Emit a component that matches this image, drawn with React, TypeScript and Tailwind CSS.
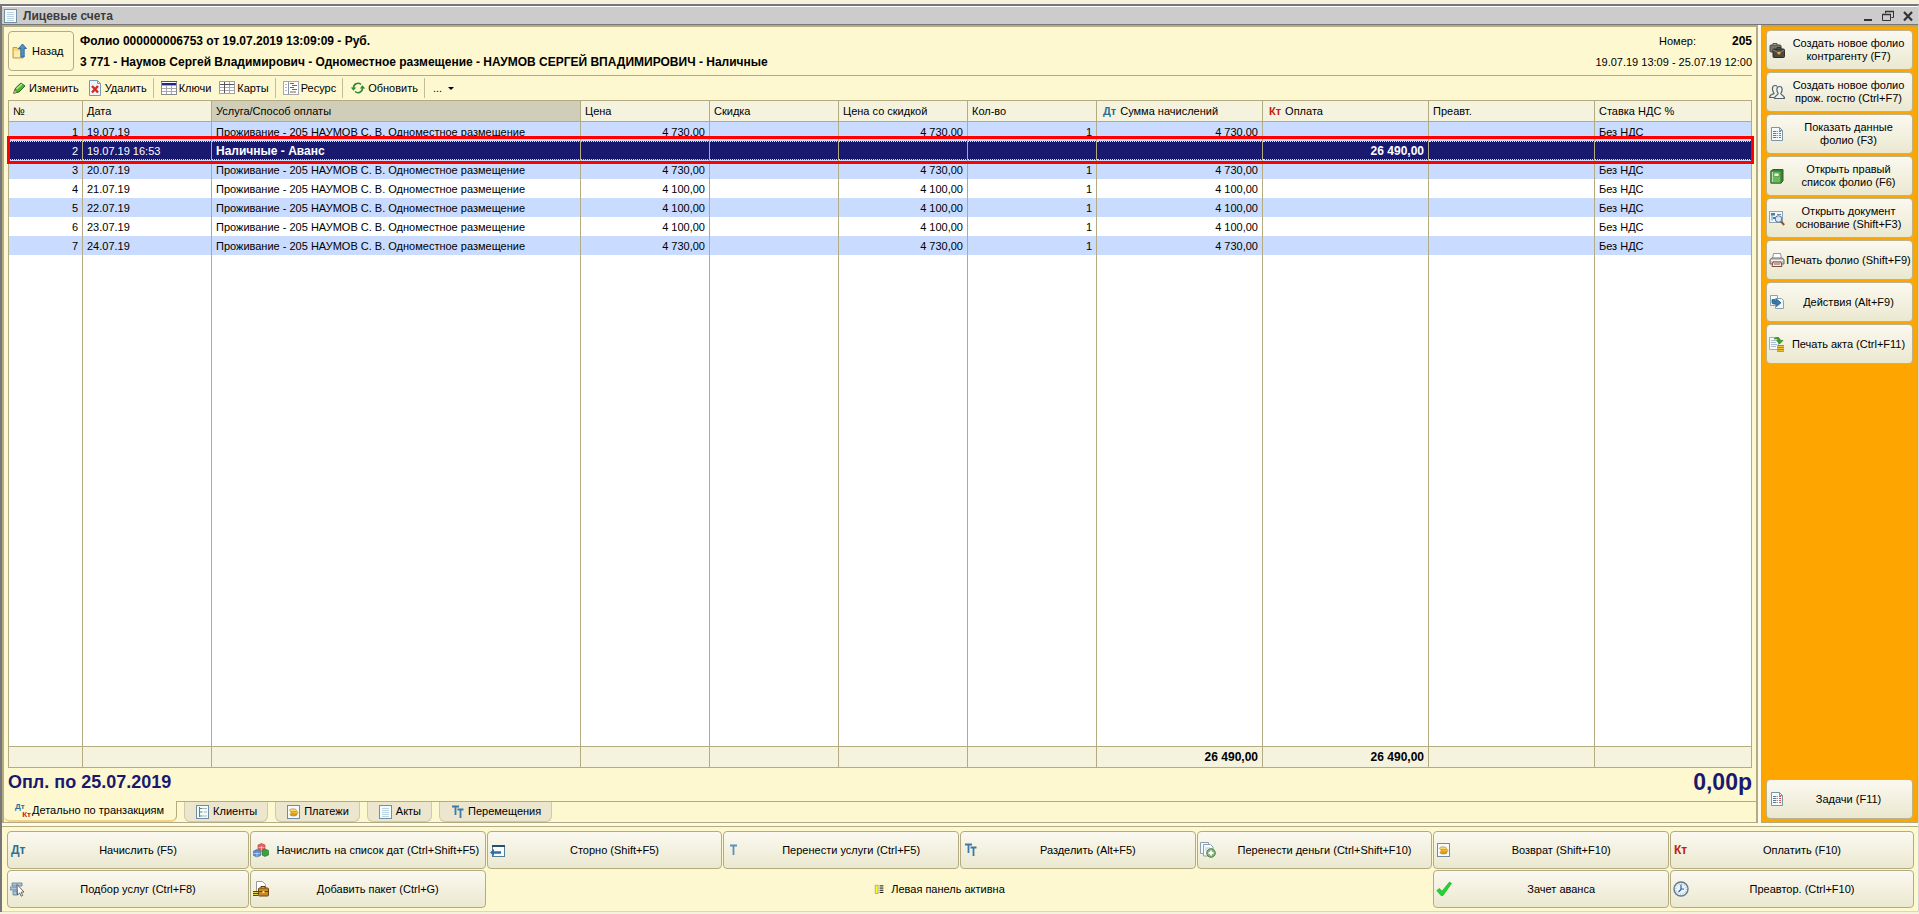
import React from "react";

/* --- ICONS --- */
const Svg = ({ children, size = 16 }: { children: React.ReactNode; size?: number }) => (
  <svg width={size} height={size} viewBox="0 0 16 16" fill="none" className="shrink-0" aria-hidden="true">
    {children}
  </svg>
);

const PageIcon = ({ size }: { size?: number }) => (
  <Svg size={size}>
    <rect x="1.5" y="1.5" width="12" height="13" fill="#f4fafe" stroke="#7390a3" />
    <path d="M4 4.5h7M4 6.5h7M4 8.5h7M4 10.5h7M4 12.5h7" stroke="#bcd3e2" />
  </Svg>
);

const BackIcon = () => (
  <Svg>
    <path d="M1 4.5h4l1 1.5h5v9H1z" fill="#f8d978" stroke="#c99b35" />
    <path d="M2 8h8v6H2z" fill="#fdeeb0" />
    <path d="M10.5 1l4 4.5h-2.3V14H8.8V5.500H6.500z" fill="#4b95cc" stroke="#1e5688" strokeWidth=".8" />
  </Svg>
);

const PencilIcon = () => (
  <Svg>
    <path d="M3 13l1.500-5L10 3l4 3-6 6z" fill="#52b234" stroke="#247017" />
    <path d="M5.500 9l5.500-5" stroke="#b4e99a" strokeWidth="1.500" />
    <path d="M2.500 13.500l1-3.500 3 2z" fill="#e8cf93" stroke="#4b5b2a" strokeWidth=".6" />
  </Svg>
);

const DeleteIcon = () => (
  <Svg>
    <path d="M2.500 .5h8l3 3v12h-11z" fill="#edf5fb" stroke="#7898b2" />
    <path d="M10.500 .5v3h3" stroke="#7898b2" />
    <path d="M5 6l6 6.500M11 6l-6 6.500" stroke="#d52b1e" strokeWidth="2.400" />
  </Svg>
);

const KeysIcon = () => (
  <Svg>
    <rect x=".5" y="1.500" width="15" height="13" fill="#fff" stroke="#8a8a8a" />
    <path d="M0 1.500h16" stroke="#555" />
    <rect x="1" y="3" width="14" height="2" fill="#1b2a8c" />
    <path d="M1 5.500h14M1 8.500h14M1 11.500h14M5.500 6v8M10.500 6v8" stroke="#a9a9a9" />
  </Svg>
);

const CardsIcon = () => (
  <Svg>
    <rect x=".5" y="1.500" width="15" height="12" fill="#fff" stroke="#a0a0a0" />
    <path d="M1 7.500h14M1 10.500h14M10.500 2v11" stroke="#a9a9a9" />
    <path d="M1 4.500h14M5.500 2v11" stroke="#555" />
  </Svg>
);

const ResourceIcon = () => (
  <Svg>
    <rect x=".5" y="1.500" width="15" height="13" fill="#fff" stroke="#a4a9ae" />
    <path d="M5.500 2v12" stroke="#8794a3" />
    <path d="M2 4.500h2M2 7.500h2M2 10.500h2" stroke="#b0b8c0" />
    <path d="M7 3.500h4M9 5.500h5M7 7.500h4M9 9.500h5M7 12h6" stroke="#8d5d33" />
  </Svg>
);

const RefreshIcon = () => (
  <Svg>
    <path d="M3.500 8a4.500 4.500 0 0 1 7.500-3.500M12.500 8a4.500 4.500 0 0 1-7.500 3.500" stroke="#2f8b32" strokeWidth="1.600" />
    <path d="M.8 7.500h5.400l-2.700 3.300zM9.800 8.500h5.400l-2.700-3.300z" fill="#2f8b32" />
  </Svg>
);

const CasesIcon = () => (
  <Svg>
    <path d="M4 3V1.500h4V3" stroke="#555" />
    <rect x="1" y="3" width="11" height="7" rx="1" fill="#77736b" stroke="#4a4741" />
    <path d="M8 7V5.500h4V7" stroke="#333" />
    <rect x="4" y="7" width="11.500" height="8.500" rx="1" fill="#4a4842" stroke="#2c2b28" />
    <path d="M4 8l6 3 5.500-3" stroke="#8b867a" />
    <circle cx="10" cy="11" r="1.600" fill="#f5a623" />
  </Svg>
);

const PeopleIcon = () => (
  <Svg>
    <path d="M5.500 9.500c-2 .6-4.500 1-5 4H5M5 9C3 7 2.500 1.500 6 1.500c1 0 1.700.4 2 1" stroke="#51626e" strokeWidth="1.200" />
    <path
      d="M10.500 2.500c-3.500 0-3 4.500-1.300 7C9 11.500 5.500 11 5.500 14.500h10c0-3.500-3.500-3-3.700-5C13.500 7 14 2.500 10.500 2.500z"
      fill="#f4f4ee"
      stroke="#51626e"
      strokeWidth="1.200"
    />
  </Svg>
);

const ReportIcon = () => (
  <Svg>
    <path d="M2.500 1.500h8l3 3v10h-11z" fill="#f6fafd" stroke="#7b95a8" />
    <path d="M10.500 1.500v3h3" stroke="#7b95a8" />
    <path d="M4 5.500h3M4 7.500h3M4 9.500h3M4 11.500h3" stroke="#567c9c" />
    <path d="M7.500 5.500h1.500M7.500 7.500h1.500M7.500 9.500h1.500M7.500 11.500h1.500" stroke="#999" />
    <path d="M10 5.500h2M10 7.500h2M10 9.500h2M10 11.500h2" stroke="#d2564b" />
  </Svg>
);

const BookIcon = () => (
  <Svg>
    <path d="M2 3l2-1.500h10V13l-2 2H2z" fill="#3f8a38" stroke="#2a6327" />
    <rect x="2" y="3" width="10" height="12" fill="#6cb95b" stroke="#2f7429" />
    <rect x="5" y="5" width="5" height="3.500" fill="#e2f4dc" stroke="#3c8635" strokeWidth=".6" />
    <path d="M3.500 4v10" stroke="#b9e2ae" />
  </Svg>
);

const DocSearchIcon = () => (
  <Svg>
    <rect x=".5" y="1.500" width="13" height="11" fill="#f3f8fc" stroke="#8ba5b8" />
    <path d="M2 3h4v2.500H2zM4 7h3v2H4z" fill="#4682ad" />
    <path d="M8 4.500h4M3 5v5.500" stroke="#6a93b0" />
    <circle cx="9.500" cy="9" r="3.300" fill="#d7e9f5" stroke="#63717b" />
    <path d="M12 11.500l3.200 3.500" stroke="#8a5a34" strokeWidth="2" />
  </Svg>
);

const PrinterIcon = () => (
  <Svg>
    <path d="M4.500 1.500h7l1 5h-9z" fill="#fff" stroke="#8c97a0" />
    <path d="M1 7.500L3 6h10l2 1.500V12H1z" fill="#c9c6c2" stroke="#6e6a66" />
    <path d="M2 8.500h12" stroke="#f4f1ee" />
    <path d="M4 10h8l1 4.500H3z" fill="#fbe9dd" stroke="#6e5446" />
    <path d="M5 12h6" stroke="#b0552d" />
  </Svg>
);

const ActionsIcon = () => (
  <Svg>
    <path d="M1.500 1.500h7v10h-7z" fill="#f6fafd" stroke="#8ba2b4" />
    <path d="M6.500 4.500h6l2 2v8h-8z" fill="#eff6fb" stroke="#8ba2b4" />
    <path d="M3 5.500v3c0 1 .7 1.500 2 1.500h2.500v2.500L12 8.800 7.500 5v2.500H6V5.500z" fill="#3a7cab" stroke="#205578" strokeWidth=".7" />
  </Svg>
);

const ActIcon = () => (
  <Svg>
    <path d="M.5 1.500h9v12h-9z" fill="#f7fafc" stroke="#9eb0bd" />
    <path d="M2 4.500h5M2 6.500h5M2 8.500h6M2 10.500h5" stroke="#a9bccb" />
    <path d="M5 3c3-2.500 6-1.500 6.500 1.500H14L10.500 8 7.500 4.500h2C9 3 7 2.500 5 3z" fill="#3da52c" stroke="#23731a" strokeWidth=".6" />
    <path d="M8 9.500h7V15H8z" fill="#f3c437" />
    <path d="M8 9.500h7M8 11.500h7M8 13.500h7M8 15.300h7" stroke="#b98715" />
  </Svg>
);

const CubesIcon = () => (
  <Svg>
    <path d="M5 3l3.500-1.500L12 3v4.500L8.500 9 5 7.500z" fill="#e3655d" stroke="#b03a38" strokeWidth=".6" />
    <path d="M.5 9L4 7.500 7.500 9v4.500L4 15 .5 13.500z" fill="#5b90cc" stroke="#33649b" strokeWidth=".6" />
    <path d="M9 8.500L12 7l3.500 1.500V13L12 14.500 9 13z" fill="#3da03c" stroke="#236c2b" strokeWidth=".6" />
    <path d="M4 10.500V15M.5 11.500H7M8.500 4v4.500M5.500 5.500h6" stroke="#fff" strokeOpacity=".6" strokeWidth=".8" />
  </Svg>
);

const StornoIcon = () => (
  <Svg>
    <rect x="2.500" y="3.500" width="12" height="11" fill="#f7fbfd" stroke="#527d99" />
    <path d="M2 4h13" stroke="#24516f" strokeWidth="2" />
    <path d="M0 10.500L4 7v2.300h7v2.400H4V14z" fill="#2f7198" />
  </Svg>
);

const PickIcon = () => (
  <Svg>
    <path d="M2 2h10v3H2zM0 6h8v3H0zM3 10h4v4H3z" fill="#a9c4d8" stroke="#5c7f98" strokeWidth=".8" />
    <path d="M7 3.500l7 7.500-2.800.2 1.500 3.200-1.500.8-1.500-3.200L7.500 14z" fill="#fff" stroke="#555" strokeWidth=".9" />
  </Svg>
);

const PackageIcon = () => (
  <Svg>
    <path d="M3.500.5h6l3 3v9h-9z" fill="#fff" stroke="#9a9a9a" />
    <path d="M8 7V5.500h4V7" stroke="#5b3a10" />
    <rect x="5.500" y="7" width="10" height="8" rx="1" fill="#c98a25" stroke="#6b4410" />
    <path d="M5.500 10.500h10" stroke="#6b4410" />
    <path d="M9.500 10h2v2h-2z" fill="#ffe48a" />
    <path d="M0 10.500h5M0 12.500h5M0 14.500h5" stroke="#4d4a10" />
    <path d="M0 11.500h5M0 13.500h5" stroke="#e5d83c" />
  </Svg>
);

const CopyPlusIcon = () => (
  <Svg>
    <path d="M.5.5h8v11h-8z" fill="#f5f9fc" stroke="#8ba0b0" />
    <path d="M3.500 2.500h7l2.500 2.500v9h-9.500z" fill="#f8fbfd" stroke="#8ba0b0" />
    <path d="M5 6h5M5 8h3" stroke="#b7c8d5" />
    <circle cx="11" cy="11" r="4.300" fill="#84b877" stroke="#557f4c" />
    <path d="M11 8.500v5M8.500 11h5" stroke="#fff" strokeWidth="1.800" />
  </Svg>
);

const CoinsIcon = () => (
  <Svg>
    <rect x="1.500" y="1.500" width="12" height="13" fill="#f6fafd" stroke="#6f8ca3" />
    <ellipse cx="7.500" cy="10.500" rx="3.500" ry="1.500" fill="#e2a21d" stroke="#b87c10" strokeWidth=".6" />
    <ellipse cx="8.500" cy="8.500" rx="3.500" ry="1.500" fill="#f2bd3a" stroke="#b87c10" strokeWidth=".6" />
    <ellipse cx="7" cy="6.300" rx="3.500" ry="1.500" fill="#fbd862" stroke="#b87c10" strokeWidth=".6" />
  </Svg>
);

const ClientsIcon = () => (
  <Svg>
    <rect x="1.500" y="1.500" width="12" height="13" fill="#f4fafb" stroke="#6f8ca3" />
    <path d="M4.500 3v10M4.500 4.500h3M4.500 8h3M4.500 12h3" stroke="#4f8c74" />
    <path d="M8 4.500h4M9 8h3M8 12h4" stroke="#a4b6c2" />
  </Svg>
);

const CheckIcon = () => (
  <Svg>
    <path d="M.8 9.500l2.700-2 2.500 2.700L13.500 1l2 1.500L7 14.500H5z" fill="#22d432" stroke="#14a324" strokeWidth=".6" />
  </Svg>
);

const ClockIcon = () => (
  <Svg>
    <circle cx="8" cy="8" r="7" fill="#e8f2fa" stroke="#62798b" strokeWidth="1.400" />
    <circle cx="8" cy="8" r="5.200" stroke="#8fa9bd" strokeDasharray="1 1.700" />
    <path d="M8 3.500v5L5.500 11M8 8h3" stroke="#2d6390" strokeWidth="1.200" />
  </Svg>
);

const PanelIcon = () => (
  <Svg size={10}>
    <rect x="2" y="2" width="4.500" height="13" fill="#ff0" stroke="#aaa" strokeWidth="1.500" />
    <path d="M9 3h6M9 6.500h6M9 10h6M9 13.500h6" stroke="#111" strokeWidth="1.600" />
  </Svg>
);

const Debit = () => <span className="w-4 shrink-0 pl-px text-left text-xs font-bold text-[#2e6f97]">Дт</span>;
const Credit = () => <span className="w-4 shrink-0 pl-px text-left text-xs font-bold text-[#c4200c]">Кт</span>;
const DebitCredit = () => (
  <span className="relative block h-4 w-4 shrink-0 text-[8px] leading-none font-bold">
    <span className="absolute top-0 left-0 text-[#2e6f97]">Дт</span>
    <span className="absolute right-0 bottom-0 text-[#c4200c]">Кт</span>
  </span>
);
const OneT = () => (
  <Svg>
    <path d="M4 3.500h7M7.500 3v10" stroke="#5a93b8" strokeWidth="1.800" />
  </Svg>
);
const TwoT = () => (
  <Svg>
    <path d="M2 2.500h7M5.500 2v9" stroke="#3c7ba5" strokeWidth="1.800" />
    <path d="M7.500 5.500h6M10.500 5v9" stroke="#3c7ba5" strokeWidth="1.800" />
  </Svg>
);

/* --- DATA --- */
const columns = [
  { title: "№", width: "w-[74px]" },
  { title: "Дата", width: "w-[129px]" },
  { title: "Услуга/Способ оплаты", width: "" },
  { title: "Цена", width: "w-[129px]" },
  { title: "Скидка", width: "w-[129px]" },
  { title: "Цена со скидкой", width: "w-[129px]" },
  { title: "Кол-во", width: "w-[129px]" },
  { title: "Сумма начислений", width: "w-[166px]", mark: "Дт" },
  { title: "Оплата", width: "w-[166px]", mark: "Кт" },
  { title: "Преавт.", width: "w-[166px]" },
  { title: "Ставка НДС %", width: "w-[157px]" },
];

const stay = "Проживание - 205 НАУМОВ С. В. Одноместное размещение";

const charge = (n: string, date: string, price: string) => [
  n, date, stay, price, "", price, "1", price, "", "", "Без НДС",
];

const rows = [
  charge("1", "19.07.19", "4 730,00"),
  ["2", "19.07.19 16:53", "Наличные - Аванс", "", "", "", "", "", "26 490,00", "", ""],
  charge("3", "20.07.19", "4 730,00"),
  charge("4", "21.07.19", "4 100,00"),
  charge("5", "22.07.19", "4 100,00"),
  charge("6", "23.07.19", "4 100,00"),
  charge("7", "24.07.19", "4 730,00"),
];

const totals = ["", "", "", "", "", "", "", "26 490,00", "26 490,00", "", ""];

const SELECTED = 1;
const rightAligned = [0, 3, 4, 5, 6, 7, 8, 9];
const align = (i: number) => (rightAligned.includes(i) ? "text-right" : "text-left");

const rowColor = (r: number) => {
  if (r === SELECTED) return "bg-[#191970] text-white";
  return r % 2 === 0 ? "bg-[#c9dbff]" : "bg-white";
};

const sideActions = [
  { label: "Создать новое фолио контрагенту (F7)", icon: <CasesIcon /> },
  { label: "Создать новое фолио прож. гостю (Ctrl+F7)", icon: <PeopleIcon /> },
  { label: "Показать данные фолио (F3)", icon: <ReportIcon /> },
  { label: "Открыть правый список фолио (F6)", icon: <BookIcon /> },
  { label: "Открыть документ основание (Shift+F3)", icon: <DocSearchIcon /> },
  { label: "Печать фолио (Shift+F9)", icon: <PrinterIcon /> },
  { label: "Действия (Alt+F9)", icon: <ActionsIcon /> },
  { label: "Печать акта (Ctrl+F11)", icon: <ActIcon /> },
];

const tabs = [
  { label: "Клиенты", icon: <ClientsIcon /> },
  { label: "Платежи", icon: <CoinsIcon /> },
  { label: "Акты", icon: <PageIcon /> },
  { label: "Перемещения", icon: <TwoT /> },
];

const topRow = [
  { label: "Начислить (F5)", icon: <Debit /> },
  { label: "Начислить на список дат (Ctrl+Shift+F5)", icon: <CubesIcon /> },
  { label: "Сторно (Shift+F5)", icon: <StornoIcon /> },
  { label: "Перенести услуги (Ctrl+F5)", icon: <OneT /> },
  { label: "Разделить (Alt+F5)", icon: <TwoT /> },
  { label: "Перенести деньги (Ctrl+Shift+F10)", icon: <CopyPlusIcon /> },
  { label: "Возврат (Shift+F10)", icon: <CoinsIcon /> },
  { label: "Оплатить (F10)", icon: <Credit /> },
];

/* --- PARTS --- */
type ButtonProps = { label: string; icon: React.ReactNode };

const SideButton = ({ label, icon }: ButtonProps) => (
  <button className="flex h-10 items-center rounded border border-[#b9b48d] bg-linear-to-b from-[#fbf9f0] to-[#ebe8d0] pl-[2px] leading-[13px]">
    {icon}
    <span className="flex-1 text-center text-balance">{label}</span>
  </button>
);

const CommandButton = ({ label, icon }: ButtonProps) => (
  <button className="flex h-[38px] items-center rounded border border-[#b3ac82] bg-linear-to-b from-[#fbf9f0] to-[#ebe8d0] pl-[2px]">
    {icon}
    <span className="ml-[2px] flex-1 text-center whitespace-nowrap">{label}</span>
  </button>
);

const ToolButton = ({ label, icon }: ButtonProps) => (
  <button className="flex items-center gap-[2px] px-px">
    {icon}
    {label}
  </button>
);

const Separator = () => <span className="-ml-px h-5 w-px bg-[#c4bd93]" />;

function FolioTable() {
  return (
    <div className="relative grid flex-1">
      <table className="w-full table-fixed border-separate border-spacing-0 border-t border-l border-[#b3ac82] bg-white">
        <colgroup>
          {columns.map((c) => (
            <col key={c.title} className={c.width} />
          ))}
        </colgroup>
        <thead>
          <tr className="h-[21px] bg-[#f5f2dd]">
            {columns.map((c, i) => (
              <th
                key={c.title}
                className={`border-r border-b border-[#b3ac82] px-1 text-left font-normal ${i === 2 ? "bg-[#d0ceb8]" : ""}`}
              >
                {c.mark && (
                  <b className={`mr-1 ml-[2px] ${c.mark === "Дт" ? "text-[#2e6f97]" : "text-[#c4200c]"}`}>{c.mark}</b>
                )}
                {c.title}
              </th>
            ))}
          </tr>
        </thead>
        <tbody>
          {rows.map((row, r) => (
            <tr key={row[0]} className={`h-[19px] ${rowColor(r)}`}>
              {row.map((cell, i) => (
                <td
                  key={i}
                  className={`overflow-hidden border-r border-r-[#b3ac82] px-1 pt-[2px] whitespace-nowrap ${align(i)} ${
                    r === SELECTED ? "border-y border-y-[#e6e6b0] [border-block-style:dotted]" : ""
                  } ${r === SELECTED && i > 1 ? "text-xs leading-[13px] font-bold" : ""}`}
                >
                  {cell}
                </td>
              ))}
            </tr>
          ))}
          <tr className="h-full">
            {columns.map((c) => (
              <td key={c.title} className="border-r border-[#b3ac82]" />
            ))}
          </tr>
        </tbody>
        <tfoot>
          <tr className="h-[22px] bg-[#f5f2dd] text-xs font-bold">
            {totals.map((cell, i) => (
              <td key={i} className={`border-t border-r border-b border-[#b3ac82] px-1 leading-4 ${align(i)}`}>
                {cell}
              </td>
            ))}
          </tr>
        </tfoot>
      </table>
      {/* selected row frame */}
      <div className="pointer-events-none absolute top-9 -right-[2px] -left-px h-7 border-[3px] border-[#ff0000]" />
    </div>
  );
}

export default function App() {
  return (
    <div className="flex min-h-screen flex-col bg-[#f5f2dd] pt-1 font-['Liberation_Sans',Arial,sans-serif] text-[11px] leading-[13px] text-black">
      <div className="mb-[2px] flex flex-1 flex-col border-t-2 border-r border-l-2 border-t-[#77777a] border-r-[#d5d5d5] border-l-[#77777a] bg-[#fffbe9]">
        {/* --- TITLE BAR --- */}
        <header className="flex h-[19px] items-center border-t border-b border-t-white border-b-[#77777a] bg-[#cccccc] pr-1 pl-px">
          <PageIcon />
          <h1 className="ml-1 flex-1 text-xs leading-4 font-bold text-[#3c3c3c]">Лицевые счета</h1>
          <div className="flex gap-2">
            <button aria-label="Свернуть" className="text-[#333]">
              <svg width="12" height="12" viewBox="0 0 12 12">
                <path d="M2 10h8" stroke="currentColor" strokeWidth="2" />
              </svg>
            </button>
            <button aria-label="Восстановить" className="text-[#333]">
              <svg width="12" height="12" viewBox="0 0 12 12" fill="none">
                <path d="M3.500 3.500v-2h8v6h-2M.5 4.500h8v6h-8z" stroke="currentColor" />
                <path d="M3 1.500h9M0 4.500h9" stroke="currentColor" strokeWidth="1.600" />
              </svg>
            </button>
            <button aria-label="Закрыть" className="text-[#333]">
              <svg width="12" height="12" viewBox="0 0 12 12">
                <path d="M2 2l8 8.500M10 2l-8 8.500" stroke="currentColor" strokeWidth="2.200" />
              </svg>
            </button>
          </div>
        </header>

        <div className="flex flex-1">
          {/* --- FOLIO --- */}
          <main className="flex flex-1 flex-col border-t-2 border-r-2 border-b border-l-2 border-[#b3ac82] bg-[#fef8d0]">
            <div className="flex flex-1 flex-col px-1">
              <div className="mt-1 flex items-start border-b border-[#b3ac82] pb-[2px]">
                <button className="flex h-10 w-[66px] items-center gap-1 rounded-sm border border-[#b3ac82] pl-[3px]">
                  <BackIcon />
                  Назад
                </button>
                <div className="ml-[6px] flex-1 text-xs leading-[21px] font-bold">
                  <p>Фолио 000000006753 от 19.07.2019 13:09:09 - Руб.</p>
                  <p>3 771 - Наумов Сергей Владимирович - Одноместное размещение - НАУМОВ СЕРГЕЙ ВПАДИМИРОВИЧ - Наличные</p>
                </div>
                <div className="text-right leading-[21px]">
                  <p className="flex h-[21px] justify-end gap-9">
                    Номер: <b className="text-xs leading-[21px]">205</b>
                  </p>
                  <p>19.07.19 13:09 - 25.07.19 12:00</p>
                </div>
              </div>

              <div className="flex h-6 items-center gap-[6px] pl-[2px]">
                <ToolButton label="Изменить" icon={<PencilIcon />} />
                <ToolButton label="Удалить" icon={<DeleteIcon />} />
                <Separator />
                <ToolButton label="Ключи" icon={<KeysIcon />} />
                <ToolButton label="Карты" icon={<CardsIcon />} />
                <Separator />
                <ToolButton label="Ресурс" icon={<ResourceIcon />} />
                <Separator />
                <ToolButton label="Обновить" icon={<RefreshIcon />} />
                <Separator />
                <button className="flex items-center gap-1 pl-[2px]">
                  ...
                  <svg width="9" height="5" viewBox="0 0 9 5" aria-hidden="true">
                    <path d="M2 1h6L5 4z" fill="#000" />
                  </svg>
                </button>
              </div>

              <FolioTable />

              <div className="flex h-[33px] items-start justify-between pt-1 font-bold text-[#191970]">
                <span className="text-lg leading-5">Опл. по 25.07.2019</span>
                <span className="text-[23px] leading-5">0,00р</span>
              </div>
            </div>

            {/* --- TABS --- */}
            <div role="tablist" className="flex h-[21px]">
              <button
                role="tab"
                aria-selected="true"
                className="flex h-[21px] items-center gap-px rounded-b-md border-r border-b-2 border-r-[#b3ac82] border-b-[#f3cf8c] pr-3 pl-[11px]"
              >
                <DebitCredit />
                Детально по транзакциям
              </button>
              <div className="flex flex-1 gap-[7px] border-t border-[#b3ac82] pl-[7px]">
                {tabs.map((t) => (
                  <button
                    key={t.label}
                    role="tab"
                    aria-selected="false"
                    className="flex h-5 items-center gap-[2px] rounded-b-md border-r border-b border-l border-[#d0caa8] bg-[#ebe6cd] px-[10px]"
                  >
                    {t.icon}
                    {t.label}
                  </button>
                ))}
              </div>
            </div>
          </main>

          {/* --- SIDE ACTIONS --- */}
          <aside className="ml-[3px] flex w-[157px] flex-col gap-[2px] border border-t-2 border-[#b3ac82] border-t-[#d9a030] bg-[#ffa500] px-1 py-[3px]">
            {sideActions.map((a) => (
              <SideButton key={a.label} {...a} />
            ))}
            <div className="flex-1" />
            <SideButton label="Задачи (F11)" icon={<ReportIcon />} />
          </aside>
        </div>

        {/* --- COMMANDS --- */}
        <footer className="mt-[3px] grid grid-cols-[242px_repeat(6,minmax(0,1fr))_244px] gap-px border-t border-b border-t-[#b3ac82] border-b-[#d5d5d5] bg-[#fef8d0] pt-1 pr-1 pb-[3px] pl-[5px]">
          {topRow.map((a) => (
            <CommandButton key={a.label} {...a} />
          ))}
          <CommandButton label="Подбор услуг (Ctrl+F8)" icon={<PickIcon />} />
          <CommandButton label="Добавить пакет (Ctrl+G)" icon={<PackageIcon />} />
          <button className="col-span-4 flex items-center justify-center gap-[7px] pr-10">
            <PanelIcon />
            Левая панель активна
          </button>
          <CommandButton label="Зачет аванса" icon={<CheckIcon />} />
          <CommandButton label="Преавтор. (Ctrl+F10)" icon={<ClockIcon />} />
        </footer>
      </div>
    </div>
  );
}
